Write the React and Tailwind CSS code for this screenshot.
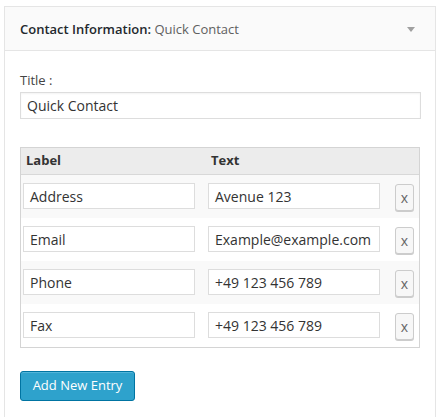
export default function App() {
  const rows = [
    ["Address", "Avenue 123"],
    ["Email", "Example@example.com"],
    ["Phone", "+49 123 456 789"],
    ["Fax", "+49 123 456 789"],
  ];
  return (
    <div className="w-[442px] h-[417px] bg-white overflow-hidden pt-[6px] pl-[4px]" style={{ fontFamily: '"Open Sans", sans-serif' }}>
      <div className="w-[432px] h-[420px] border border-[#e5e5e5] bg-white">
        <div className="h-[44px] border-b border-[#e5e5e5] bg-[#fafafa] flex items-center justify-between pl-[15px] pr-[20px] pt-[3px]">
          <div className="text-[13px] text-[#23282d]">
            <span className="font-semibold">Contact Information:</span>{" "}
            <span className="text-[#606060]">Quick Contact</span>
          </div>
          <svg width="8" height="6" viewBox="0 0 8 6"><path d="M0 0 L8 0 L4 5 Z" fill="#a0a0a0" /></svg>
        </div>
        <div className="pl-[15px] pr-[13px] pt-[20px]">
          <div className="text-[13px] leading-[18px] text-[#444]">Title :</div>
          <div className="mt-[3px] h-[27px] w-[401px] border border-[#dddddd] flex items-center pl-[6px] text-[14px] text-[#333] shadow-[inset_0_1px_2px_rgba(0,0,0,0.05)]">Quick Contact</div>
          <div className="mt-[28px] w-[400px] border border-[#d4d4d4]">
            <div className="h-[27px] bg-[#ececec] border-b border-[#d8d8d8] flex items-center text-[13px] font-bold text-[#333]">
              <div className="w-[185px] pl-[5px]">Label</div>
              <div className="w-[177px] pl-[5px]">Text</div>
            </div>
            {rows.map(([a, b], i) => (
              <div key={i} className={`h-[43px] flex items-start pt-[8px] ${i % 2 === 0 ? "bg-[#f9f9f9]" : "bg-white"}`}>
                <div className="w-[185px] pl-[2px]">
                  <div className="w-[172px] h-[26px] border border-[#dddddd] bg-white flex items-center pl-[6px] text-[14px] text-[#333]">{a}</div>
                </div>
                <div className="w-[177px] pl-[2px]">
                  <div className="w-[172px] h-[26px] border border-[#dddddd] bg-white flex items-center pl-[6px] text-[14px] text-[#333] whitespace-nowrap overflow-hidden">{b}</div>
                </div>
                <div className="pl-[12px]">
                  <div className="w-[19px] h-[27px] mt-[1px] border border-[#cccccc] rounded-[3px] bg-[#f7f7f7] flex items-center justify-center text-[14px] text-[#666] shadow-[0_1px_0_#ccc]">x</div>
                </div>
              </div>
            ))}
          </div>
          <div className="mt-[23px] w-[115px] h-[30px] bg-[#2ea2cc] border border-[#0074a2] rounded-[3px] flex items-center justify-center text-[13px] text-white shadow-[inset_0_1px_0_rgba(120,200,230,0.5)]">Add New Entry</div>
        </div>
      </div>
    </div>
  );
}
